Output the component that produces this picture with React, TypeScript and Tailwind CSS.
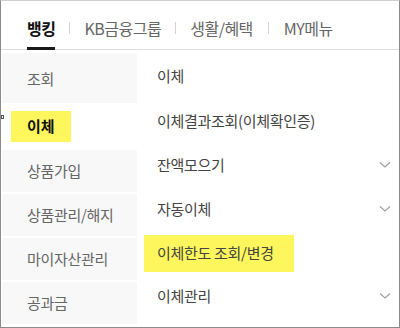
import React from "react";

const font = { fontFamily: '"Noto Sans CJK KR", "Noto Sans", sans-serif' };

function Chevron() {
  return (
    <svg width="12" height="8" viewBox="0 0 12 8" className="shrink-0">
      <path d="M1 1.5 L6 6 L11 1.5" fill="none" stroke="#a0a0a0" strokeWidth="1.2" />
    </svg>
  );
}

export default function App() {
  const left = ["조회", "이체", "상품가입", "상품관리/해지", "마이자산관리", "공과금"];
  const right: { t: string; chev?: boolean; hl?: boolean }[] = [
    { t: "이체" },
    { t: "이체결과조회(이체확인증)" },
    { t: "잔액모으기", chev: true },
    { t: "자동이체", chev: true },
    { t: "이체한도 조회/변경", hl: true },
    { t: "이체관리", chev: true },
  ];
  return (
    <div
      className="w-[400px] h-[328px] bg-white border border-[#8c8c8c] border-t-[#d0d0d0] flex flex-col overflow-hidden relative"
      style={font}
    >
      <div className="h-[49px] flex items-end pl-[26px] border-b border-[#dcdcdc] shrink-0">
        <div className="flex items-center h-[48px] pt-[5px] text-[16px]">
          <div className="h-full flex flex-col justify-center relative">
            <span className="font-bold text-[#111] tracking-[-0.5px]">뱅킹</span>
            <div className="absolute bottom-[-1px] left-0 right-0 h-[3px] bg-[#1a1a1a]" />
          </div>
          <span className="mx-[14px] w-px h-[12px] bg-[#d4d4d4]" />
          <span className="text-[#666] tracking-[-0.5px]">KB금융그룹</span>
          <span className="mx-[14px] w-px h-[12px] bg-[#d4d4d4]" />
          <span className="text-[#666] tracking-[-0.5px]">생활/혜택</span>
          <span className="mx-[15px] w-px h-[12px] bg-[#d4d4d4]" />
          <span className="text-[#666] tracking-[-0.5px]">MY메뉴</span>
        </div>
      </div>
      <div className="flex flex-1 pt-[3px] pb-[2px]">
        <div className="w-[136px] flex flex-col gap-[2px] pl-[1px]">
          {left.map((t, i) =>
            i === 1 ? (
              <div key={t} className="h-[43px] bg-white flex items-center pl-[9px]">
                <span className="bg-[#fdf65c] h-[31px] w-[60px] flex items-center pl-[16px] text-[15px] font-bold text-[#111]">
                  {t}
                </span>
              </div>
            ) : (
              <div
                key={t}
                className={`${i === 0 ? "h-[50px] pt-[3px]" : "h-[42px]"} bg-[#f8f8f8] flex items-center pl-[25px] text-[15px] text-[#666] tracking-[-0.3px]`}
              >
                {t}
              </div>
            )
          )}
        </div>
        <div className="flex-1 flex flex-col pt-[1px]">
          {right.map((r, i) => (
            <div
              key={r.t}
              className={`${i === 1 ? "h-[45px] pt-[2px]" : i === 4 ? "h-[44px] pt-[1px]" : i === 5 ? "h-[42px]" : "h-[44px]"} flex items-center pr-[8px] text-[15px] text-[#444] tracking-[-0.3px]`}
            >
              {r.hl ? (
                <span className="ml-[7px] bg-[#fdf65c] h-[37px] w-[150px] flex items-center pl-[13px]">{r.t}</span>
              ) : (
                <span className="pl-[20px] flex-1">{r.t}</span>
              )}
              {r.chev && <Chevron />}
            </div>
          ))}
        </div>
      </div>
      <div className="absolute left-0 top-[114px] w-[3px] h-[4px] border border-[#555]" />
    </div>
  );
}
